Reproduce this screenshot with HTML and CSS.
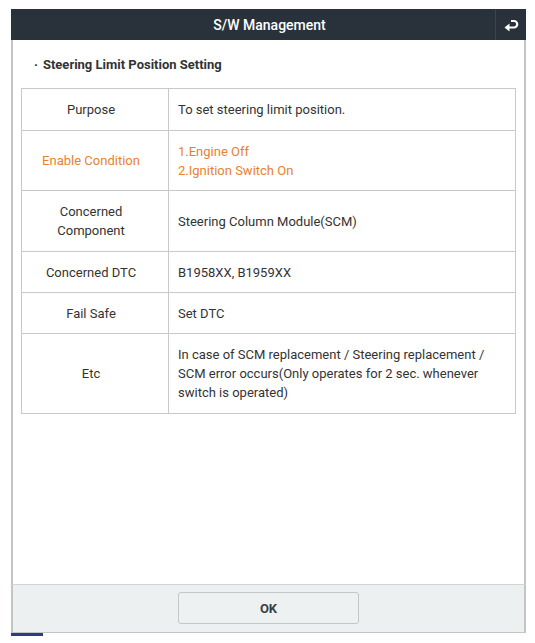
FILE: index.html
```html
<!DOCTYPE html>
<html>
<head>
<meta charset="utf-8">
<link rel="stylesheet" href="styles.css">
</head>
<body>
<div class="dialog">
  <div class="header">
    <div class="title">S/W Management</div>
    <div class="back">
      <svg width="16" height="14" viewBox="0 0 16 14">
        <path d="M8 3 H11 A3 3 0 0 1 11 9.5 H5" fill="none" stroke="#fff" stroke-width="2.2"/>
        <path d="M1.5 9.5 L6.5 5.5 L6.5 13.5 Z" fill="#fff"/>
      </svg>
    </div>
  </div>
  <div class="content">
    <div class="heading"><span class="dot">·</span>Steering Limit Position Setting</div>
    <table class="info">
      <tr class="r1"><td class="k">Purpose</td><td class="v">To set steering limit position.</td></tr>
      <tr class="r2 hl"><td class="k">Enable Condition</td><td class="v">1.Engine Off<br>2.Ignition Switch On</td></tr>
      <tr class="r3"><td class="k">Concerned<br>Component</td><td class="v">Steering Column Module(SCM)</td></tr>
      <tr class="r4"><td class="k">Concerned DTC</td><td class="v">B1958XX, B1959XX</td></tr>
      <tr class="r5"><td class="k">Fail Safe</td><td class="v">Set DTC</td></tr>
      <tr class="r6"><td class="k">Etc</td><td class="v">In case of SCM replacement / Steering replacement / SCM error occurs(Only operates for 2 sec. whenever switch is operated)</td></tr>
    </table>
  </div>
  <div class="footer">
    <button class="ok">OK</button>
  </div>
</div>
<div class="taskbar"></div>
</body>
</html>
```
FILE: styles.css
```css
html, body {
  margin: 0;
  padding: 0;
  background: #fff;
  font-family: Roboto, "Liberation Sans", sans-serif;
}
.dialog {
  margin: 9px 0 0 11px;
  width: 515px;
  height: 624px;
  box-sizing: border-box;
  border-left: 2px solid #c4c4c4;
  border-right: 2px solid #c4c4c4;
  border-bottom: 1px solid #c4c4c4;
  display: flex;
  flex-direction: column;
}
.header {
  height: 31px;
  margin: 0 -2px;
  background: #29323b;
  display: flex;
  align-items: center;
  position: relative;
}
.title {
  flex: 1;
  text-align: center;
  color: #fff;
  font-size: 14px;
  font-weight: 500;
  padding-left: 2px;
}
.back {
  position: absolute;
  right: 0;
  top: 0;
  width: 30px;
  height: 31px;
  border-left: 1px solid #3b454e;
  display: flex;
  align-items: center;
  justify-content: center;
}
.content {
  flex: 1;
  background: #fff;
  padding: 0 10px 0 8px;
}
.heading {
  font-size: 13px;
  font-weight: 700;
  color: #333;
  padding: 17px 0 0 13px;
  height: 31px;
}
.dot {
  margin-right: 5px;
}
.info {
  width: 495px;
  border-collapse: collapse;
  font-size: 13px;
  color: #333;
}
.info td {
  border: 1px solid #c9c9c9;
  padding: 0;
  line-height: 19px;
}
.info .k {
  width: 147px;
  text-align: center;
  padding-right: 8px;
  box-sizing: border-box;
}
.info .v {
  padding: 0 10px 0 9px;
}
.hl td { color: #e8822f; }
.r1 { height: 42px; }
.r2 { height: 60px; }
.r3 { height: 61px; }
.r4 { height: 41px; }
.r5 { height: 41px; }
.r6 { height: 80px; }
.footer {
  height: 48px;
  background: #ecf0f0;
  border-top: 1px solid #d2d5d5;
  margin: 0 -2px 0 -2px;
  border-left: 2px solid #c4c4c4;
  border-right: 2px solid #c4c4c4;
  display: flex;
  justify-content: center;
  align-items: flex-start;
  box-sizing: border-box;
}
.ok {
  margin-top: 7px;
  width: 181px;
  height: 32px;
  background: #eef1f1;
  border: 1px solid #c3c6c7;
  border-radius: 3px;
  font-family: Roboto, "Liberation Sans", sans-serif;
  font-weight: 700;
  font-size: 13px;
  color: #3a3f44;
}
.taskbar {
  margin-left: 11px;
  width: 32px;
  height: 3px;
  background: #2b3b8c;
}
```
